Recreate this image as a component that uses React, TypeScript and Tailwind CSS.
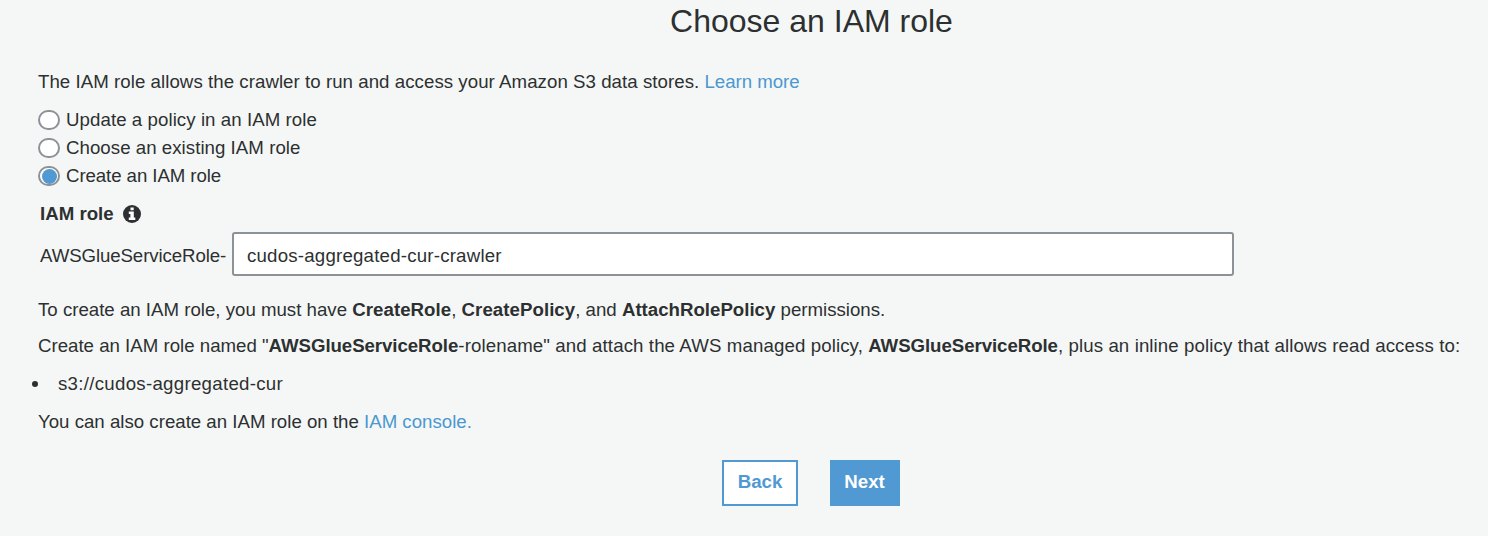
function InfoIcon() {
  return (
    <svg className="size-[18px]" viewBox="0 0 18 18" fill="none">
      <circle cx="9" cy="9" r="9" fill="#2d3030" />
      <path d="M7.5 2.4h3.2v2.8H7.5zM5.8 6.5h5v6.1h1.5v2.5H5.8v-2.5h1.6V9H5.8z" fill="#fff" />
    </svg>
  );
}

function Radio({ label, checked }: { label: string; checked?: boolean }) {
  return (
    <label className="flex h-7 items-center">
      <span className="mr-[6px] flex h-5 w-[22px] items-center justify-center rounded-[10px] border-2 border-[#8d9296] bg-white">
        {checked && <span className="mt-px h-[15px] w-[15px] shrink-0 rounded-full bg-[#5099d2]" />}
      </span>
      <span>{label}</span>
    </label>
  );
}

export default function App() {
  return (
    <main className="h-[536px] w-[1488px] overflow-hidden bg-[#f5f7f7] pl-[38px] font-['Liberation_Sans',Arial,sans-serif] text-[18.67px] leading-6 whitespace-nowrap text-[#2d3030]">
      <h1 className="h-[70px] w-[1547px] text-center text-[32px] leading-[42px]">Choose an IAM role</h1>
      <p>
        <span className="tracking-[0.05px]">
          The IAM role allows the crawler to run and access your Amazon S3 data stores.{" "}
        </span>
        <a className="tracking-[-0.03px] text-[#4c97d0]">Learn more</a>
      </p>

      <div className="mt-3">
        <div className="tracking-[0.07px]"><Radio label="Update a policy in an IAM role" /></div>
        <div className="tracking-[0.04px]"><Radio label="Choose an existing IAM role" /></div>
        <div className="tracking-[-0.08px]"><Radio label="Create an IAM role" checked /></div>
      </div>

      <div className="mt-3 ml-[2px] flex h-6 items-center gap-[9px]">
        <span className="font-bold">IAM role</span>
        <InfoIcon />
      </div>

      <div className="mt-[6px] ml-[2px] flex h-11 items-center">
        <span className="w-[192px] pt-[3px] tracking-[-0.1px]">AWSGlueServiceRole-</span>
        <input
          className="h-11 w-[1002px] rounded-[3px] border-2 border-[#8d9297] bg-white px-[13px] pt-[3px] tracking-[0.21px] outline-none"
          defaultValue="cudos-aggregated-cur-crawler"
        />
      </div>

      <p className="mt-[22px]">
        To create an IAM role, you must have <b className="tracking-[0.05px]">CreateRole</b>,{" "}
        <b className="tracking-[0.05px]">CreatePolicy</b>, and <b>AttachRolePolicy</b> permissions.
      </p>
      <p className="mt-3">
        Create an IAM role named "<b className="tracking-[-0.06px]">AWSGlueServiceRole</b>
        <span className="tracking-[0.11px]">-rolename" and attach the AWS managed policy, </span>
        <b className="tracking-[-0.06px]">AWSGlueServiceRole</b>
        <span className="tracking-[0.1px]">, plus an inline policy that allows read access to:</span>
      </p>
      <ul className="mt-[14px] -ml-[6px] tracking-[0.29px]">
        <li className="flex items-center">
          <span className="mr-5 size-[6px] rounded-full bg-[#2d3030]" />
          s3://cudos-aggregated-cur
        </li>
      </ul>
      <p className="mt-[14px]">
        You can also create an IAM role on the <a className="text-[#4c97d0]">IAM console.</a>
      </p>

      <div className="mt-[26px] ml-[684px] flex gap-8 font-bold">
        <button className="h-[46px] w-[76px] border-2 border-[#5099d2] bg-white pb-[3px] text-[#5099d2]">Back</button>
        <button className="h-[46px] w-[70px] bg-[#5099d2] pr-px pb-[3px] text-white">Next</button>
      </div>
    </main>
  );
}
